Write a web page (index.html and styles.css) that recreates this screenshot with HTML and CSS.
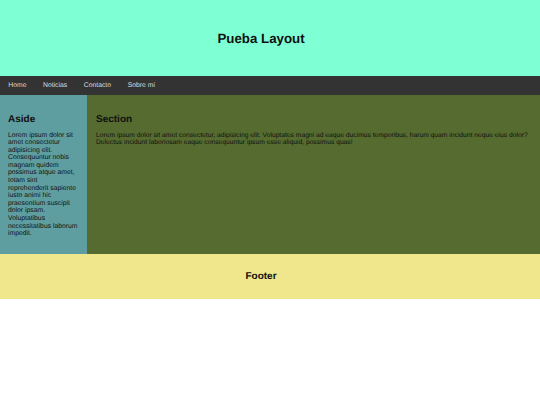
FILE: index.html
```html
<!DOCTYPE html>
<html lang="es">
<head>
<meta charset="utf-8">
<title>Pueba Layout</title>
<link rel="stylesheet" href="styles.css">
</head>
<body>
<div class="page">
  <header class="header"><h1 class="title">Pueba Layout</h1></header>
  <nav class="nav">
    <a class="nav-link" href="#">Home</a>
    <a class="nav-link" href="#">Noticias</a>
    <a class="nav-link" href="#">Contacto</a>
    <a class="nav-link" href="#">Sobre mí</a>
  </nav>
  <main class="main">
    <aside class="aside">
      <h2 class="heading">Aside</h2>
      <p class="text">Lorem ipsum dolor sit amet consectetur adipisicing elit. Consequuntur nobis magnam quidem possimus atque amet, totam sint reprehenderit sapiente iusto animi hic praesentium suscipit dolor ipsam. Voluptatibus necessitatibus laborum impedit.</p>
    </aside>
    <section class="section">
      <h2 class="heading">Section</h2>
      <p class="text section-text">Lorem ipsum dolor sit amet consectetur, adipisicing elit. Voluptates magni ad eaque ducimus temporibus, harum quam incidunt neque eius dolor? Delectus incidunt laboriosam eaque consequuntur ipsum esse aliquid, possimus quas!</p>
    </section>
  </main>
  <footer class="footer"><h2 class="footer-title">Footer</h2></footer>
</div>
</body>
</html>
```
FILE: styles.css
```css
html, body {
  margin: 0;
  padding: 0;
  background: #ffffff;
  font-family: "Liberation Sans", Arial, sans-serif;
  color: #000;
  text-rendering: geometricPrecision;
}
.page {
  display: flex;
  flex-direction: column;
}
.header {
  background: #7fffd4;
  height: 76px;
  padding-right: 18px;
  display: flex;
  align-items: center;
  justify-content: center;
}
.title {
  margin: 0;
  font-size: 13.3px;
  font-weight: bold;
  color: #111;
}
.nav {
  background: #333333;
  height: 19px;
  display: flex;
  align-items: center;
}
.nav-link {
  color: #dddddd;
  text-decoration: none;
  font-size: 6.8px;
  padding: 0 8.3px;
}
.main {
  display: grid;
  grid-template-columns: 87px 1fr;
}
.aside {
  background: #5f9ea0;
  padding: 8px 9px 10px 8px;
}
.section {
  background: #556b2f;
  padding: 8px 6px 8px 9px;
}
.heading {
  font-size: 10px;
  font-weight: bold;
  margin: 10.5px 0 7px;
  color: #111;
}
.text {
  font-size: 6.8px;
  line-height: 7.6px;
  margin: 6.6px 0;
  color: #111;
}
.section-text {
  font-size: 6.72px;
}
.footer {
  background: #f0e68c;
  height: 45px;
  padding-right: 18px;
  display: flex;
  align-items: center;
  justify-content: center;
}
.footer-title {
  margin: 0;
  font-size: 10px;
  font-weight: bold;
  color: #111;
}
```
